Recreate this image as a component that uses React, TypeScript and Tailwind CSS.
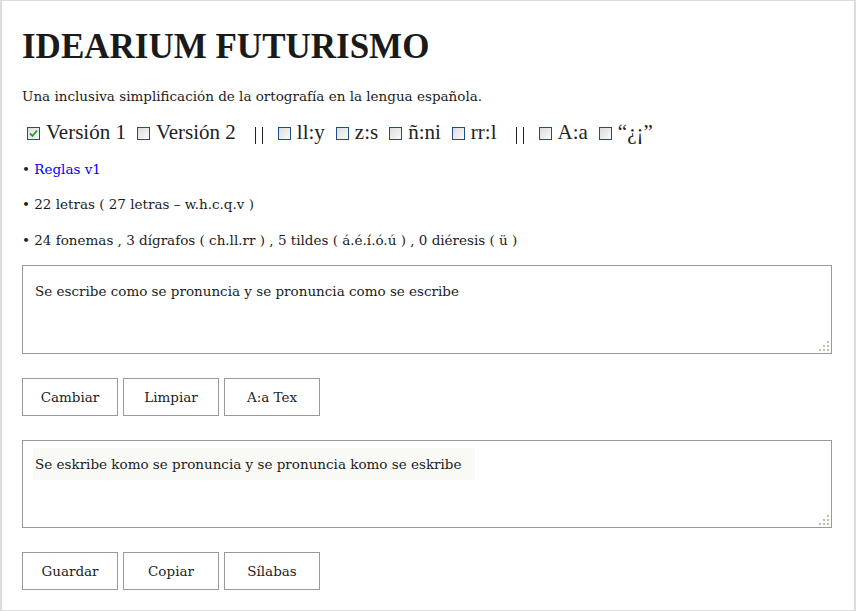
import React from 'react';

const body = "font-['DejaVu_Serif',serif]";

const Box: React.FC<{ checked?: boolean }> = ({ checked }) => (
  <span className="inline-flex w-[13px] h-[13px] border border-[#1f4f82] bg-gradient-to-br from-[#dcdcdc] to-[#fbfbfb] items-center justify-center shrink-0">
    {checked && (
      <svg width="9" height="9" viewBox="0 0 9 9">
        <path d="M1 4.5 L3.5 7 L8 1.5" fill="none" stroke="#22a12a" strokeWidth="1.8" />
      </svg>
    )}
  </span>
);

const Grip = () => (
  <svg className="absolute right-[2px] bottom-[2px]" width="10" height="10" viewBox="0 0 10 10">
    {[
      [8, 0], [4, 4], [8, 4], [0, 8], [4, 8], [8, 8]
    ].map(([x, y], i) => (
      <rect key={i} x={x} y={y} width="2" height="2" fill="#c4bea6" />
    ))}
  </svg>
);

const Btn: React.FC<{ label: string }> = ({ label }) => (
  <button className={`w-[96px] h-[38px] border border-[#9a9a9a] bg-white text-[13.5px] text-[#222] ${body} overflow-hidden whitespace-nowrap`}>
    {label}
  </button>
);

// the "||" divider between groups
const Sep = () => (
  <span className="flex items-stretch gap-[6px] ml-[8px] mr-[15px] h-[17px] mt-[4px]">
    <span className="w-px bg-[#222]" />
    <span className="w-px bg-[#222]" />
  </span>
);

const options = [
  { label: 'Versión 1', checked: true },
  { label: 'Versión 2' },
  { sep: true },
  { label: 'll:y' },
  { label: 'z:s' },
  { label: 'ñ:ni' },
  { label: 'rr:l' },
  { sep: true },
  { label: 'A:a' },
  { label: '“¿¡”' }
];

const App: React.FC = () => {
  return (
    <div className="w-[856px] h-[611px] bg-white border-y border-x-2 border-[#dcdcdc] pl-5 pr-[22px] pt-[26px] text-[#1c1c1c] overflow-hidden">
      <h1 className="font-['Liberation_Serif',serif] font-bold text-[35px] leading-[40px] text-[#1a1a1a]">IDEARIUM FUTURISMO</h1>

      <p className={`${body} text-[13.5px] mt-[19px] leading-[20px]`}>
        Una inclusiva simplificación de la ortografía en la lengua española.
      </p>

      <div className="flex items-center mt-[14px] h-[26px] pl-[5px] font-['Liberation_Serif',serif] text-[21px] text-[#222]">
        {options.map((o, i) =>
          'sep' in o ? (
            <Sep key={i} />
          ) : (
            <label key={i} className="flex items-center gap-[6px] mr-[11px]">
              <Box checked={o.checked} />
              <span>{o.label}</span>
            </label>
          )
        )}
      </div>

      <div className={`${body} text-[13.5px] leading-[20px]`}>
        <p className="mt-[13px]">• <a className="text-[#0000ff]">Reglas v1</a></p>
        <p className="mt-[15px]">• 22 letras ( 27 letras – w.h.c.q.v )</p>
        <p className="mt-[16px]">• 24 fonemas , 3 dígrafos ( ch.ll.rr ) , 5 tildes ( á.é.í.ó.ú ) , 0 diéresis ( ü )</p>
      </div>

      <div className={`relative mt-[15px] w-[810px] h-[89px] border border-[#9a9a9a] px-[12px] pt-[15px] ${body} text-[13.5px] leading-[20px]`}>
        Se escribe como se pronuncia y se pronuncia como se escribe
        <Grip />
      </div>

      <div className="flex gap-[5px] mt-[24px]">
        <Btn label="Cambiar" />
        <Btn label="Limpiar" />
        <Btn label="A:a Tex" />
      </div>

      <div className={`relative mt-[24px] w-[810px] h-[88px] border border-[#9a9a9a] px-[10px] pt-[7px] ${body} text-[13.5px] leading-[20px]`}>
        <span className="inline-block bg-[#f9f9f6] pl-[2px] pr-[14px] py-[6px]">Se eskribe komo se pronuncia y se pronuncia komo se eskribe</span>
        <Grip />
      </div>

      <div className="flex gap-[5px] mt-[24px]">
        <Btn label="Guardar" />
        <Btn label="Copiar" />
        <Btn label="Sílabas" />
      </div>
    </div>
  );
};

export default App;
